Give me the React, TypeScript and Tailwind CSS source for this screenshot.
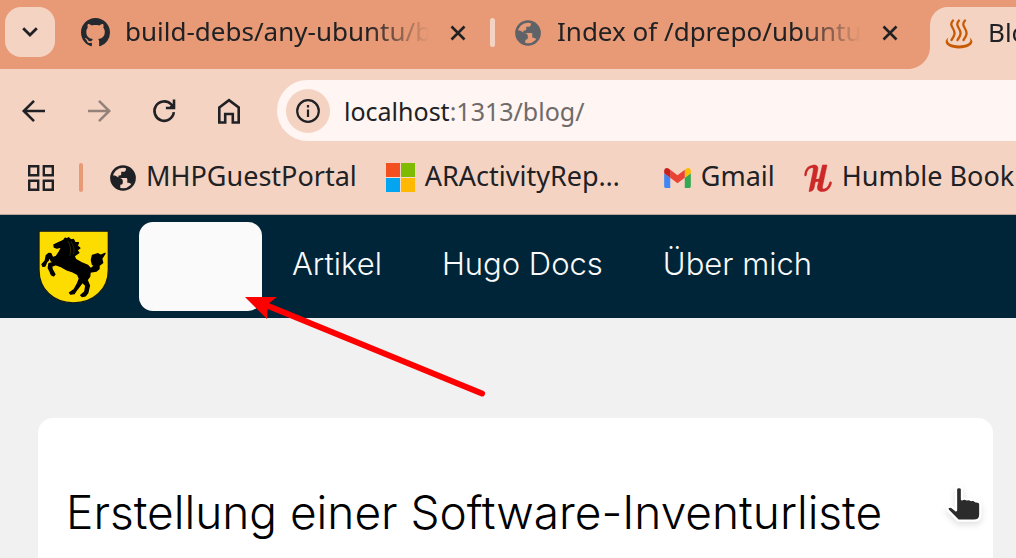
import type { ReactNode } from "react";

const GITHUB_MARK =
  "M8 0C3.58 0 0 3.58 0 8c0 3.54 2.29 6.53 5.47 7.59.4.07.55-.17.55-.38 0-.19-.01-.82-.01-1.49-2.01.37-2.53-.49-2.69-.94-.09-.23-.48-.94-.82-1.13-.28-.15-.68-.52-.01-.53.63-.01 1.08.58 1.23.82.72 1.21 1.87.87 2.33.66.07-.52.28-.87.51-1.07-1.78-.2-3.64-.89-3.64-3.95 0-.87.31-1.59.82-2.15-.08-.2-.36-1.02.08-2.12 0 0 .67-.21 2.2.82.64-.18 1.32-.27 2-.27.68 0 1.36.09 2 .27 1.53-1.04 2.2-.82 2.2-.82.44 1.1.16 1.92.08 2.12.51.56.82 1.27.82 2.15 0 3.07-1.87 3.75-3.65 3.95.29.25.54.73.54 1.48 0 1.07-.01 1.93-.01 2.2 0 .21.15.46.55.38A8.013 8.013 0 0016 8c0-4.42-3.58-8-8-8z";

function GithubIcon() {
  return (
    <svg viewBox="0 0 16 16" className="size-[29px]" fill="#24292f" aria-hidden="true">
      <path d={GITHUB_MARK} />
    </svg>
  );
}

function GlobeIcon({ className }: { className: string }) {
  return (
    <svg viewBox="0 0 26 26" className={className} aria-hidden="true">
      <circle cx="13" cy="13" r="11.6" fill="none" stroke="currentColor" strokeWidth="2.5" />
      <path
        fill="currentColor"
        d="M16.3 2.2 15.8 5c-.2 1.2-1 1.8-2.2 1.8h-2.4v2.4c0 .7-.5 1.2-1.2 1.2H8.4V13h7.5c.8 0 1.4.5 1.4 1.3v3.4h1.200c1.300 0 2.300.7 2.600 1.900C27 13.500 24.500 3.500 16.300 2.200z"
      />
      <path fill="currentColor" d="M1.500 10.500h3.500l4.500 2.600c1.800.3 3.300 1.300 3.300 3v1.600c0 1.200-.8 2-2.100 2h-.4v4.800C4.500 23.500.7 17.500 1.500 10.500z" />
    </svg>
  );
}

function SpringIcon() {
  return (
    <svg viewBox="0 0 28 30" className="h-[30px] w-7" fill="none" stroke="#c75a05" strokeLinecap="round" aria-hidden="true">
      <path strokeWidth="2.3" d="M8 1.500C3 7 10.500 9.500 9.500 15c-.3 2-1.500 4-3 6M14 1.500c-5 5.500 2.500 8 1.500 13.500-.3 2-1.500 4-3 6M20 1.500c-5 5.500 2.500 8 1.500 13.500-.3 2-1.500 4-3 6" />
      <path fill="#c75a05" stroke="none" d="M3.500 18.500C-3 23 2 29.500 14 29.500s17-6.500 10.500-11c3 4.500-2 8-10.500 8s-13.500-3.500-10.500-8z" />
    </svg>
  );
}

function CloseIcon() {
  return (
    <svg viewBox="0 0 16 16" className="size-4" fill="none" stroke="#202124" strokeWidth="2.600" aria-hidden="true">
      <path d="m1.500 1.500 13 13M14.500 1.500l-13 13" />
    </svg>
  );
}

function MicrosoftIcon() {
  return (
    <svg viewBox="0 0 29 29" className="size-[29px]" aria-hidden="true">
      <path fill="#f8d9cb" d="M0 0h29v29H0z" />
      <path fill="#f35022" d="M0 0h14v14H0z" />
      <path fill="#80bb03" d="M15 0h14v14H15z" />
      <path fill="#03a5f0" d="M0 15h14v14H0z" />
      <path fill="#ffb903" d="M15 15h14v14H15z" />
    </svg>
  );
}

function GmailIcon() {
  return (
    <svg viewBox="52 42 88 66" className="h-5 w-[27px]" aria-hidden="true">
      <path fill="#4285f4" d="M58 108h14V74L52 59v43c0 3.320 2.690 6 6 6" />
      <path fill="#34a853" d="M120 108h14c3.320 0 6-2.690 6-6V59l-20 15" />
      <path fill="#fbbc04" d="M120 48v26l20-15v-8c0-7.420-8.470-11.650-14.400-7.200" />
      <path fill="#ea4335" d="M72 74V48l24 18 24-18v26L96 92" />
      <path fill="#c5221f" d="M52 51v8l20 15V48l-5.600-4.200c-5.940-4.450-14.400-.22-14.400 7.200" />
    </svg>
  );
}

function HumbleIcon() {
  return (
    <svg viewBox="0 0 28 28" className="size-7" fill="none" stroke="#cc2929" aria-hidden="true">
      <path strokeWidth="2.400" strokeLinecap="round" d="M1.500 11C2 5 5 2 10 2.500" />
      <path
        fill="#cc2929"
        stroke="#cc2929"
        strokeWidth=".6"
        d="M8 1.500c5-1.500 6.500 1.500 5.700 4.500L10 24c-.4 2-2 3.500-5 3.500L9 8C9.500 5 9.500 2.800 8 1.500zM18.500 1h4.500L18.500 22c-.4 2 0 3 1 3 3 0 5.300-3 6-6.500.4-1.200 2.200-.8 2 .5C26.500 24 23 27.500 18.500 27.500c-4 0-5.500-2-5-5z"
      />
      <path strokeWidth="3" d="M7.500 16.500c5 .8 8 0 12-2" />
    </svg>
  );
}

function Crest() {
  return (
    <svg viewBox="55 44 214 222" className="h-[74px] w-[71px] shrink-0" role="img" aria-label="Wappen">
      <path fill="#fddc00" stroke="#101c1d" strokeWidth="4" d="M58 47h209v116c0 59-44 100-105 100S58 222 58 163z" />
      <path
        fill="#000"
        stroke="#000"
        strokeWidth="4"
        strokeLinejoin="round"
        d="M137 68 132 75 103 88 104 95 112 98 127 94 119 109 110 123 99 127 94 115 87 114 80 120 77 136 67 147 70 153 76 152 81 140 86 135 88 124 95 137 102 141 88 145 86 158 92 170 95 178 102 182 106 177 98 163 96 153 108 148 125 154 142 164 160 170 174 177 180 190 174 205 164 223 150 233 154 237 164 235 173 222 189 201 199 211 196 230 184 240 188 244 198 242 205 233 210 211 203 194 211 183 212 170 231 167 239 160 239 150 250 142 247 130 257 114 244 120 236 115 219 120 216 134 219 147 225 151 214 160 205 150 185 142 168 132 164 122 178 112 172 104 181 98 173 91 177 82 167 82 162 72 154 73 147 67 143 70z"
      />
      <path fill="none" stroke="#9b8800" strokeWidth="1" d="M145 77c8 12 11 28 6 44m3-43c8 12 12 24 8 38" />
    </svg>
  );
}

function Tab({ icon, title, active = false, divider = false }: { icon: ReactNode; title: string; active?: boolean; divider?: boolean }) {
  return (
    <div
      className={
        active
          ? "relative mt-[7px] flex w-[432px] shrink-0 items-center gap-[15px] rounded-t-[18px] bg-[#f5d3c3] pb-2 pl-3.5"
          : "relative flex w-[432px] shrink-0 items-center gap-[15px] pb-1 pl-[15px]"
      }
    >
      {active && (
        <svg viewBox="0 0 22 22" className="absolute bottom-0 -left-[22px] size-[22px]" fill="#f5d3c3" aria-hidden="true">
          <path d="M22 0v22H0C12 22 22 12 22 0z" />
        </svg>
      )}
      {divider && <span className="absolute top-[18px] -left-2 h-[29px] w-[5px] rounded-sm bg-[#f5d3c3]" />}
      <span className="flex w-[29px] shrink-0 justify-center">{icon}</span>
      <span className="w-[304px] overflow-hidden pb-1 whitespace-nowrap mask-r-from-80% mask-r-to-100%">{title}</span>
      <button type="button" aria-label={`${title} schließen`} className="ml-1.5">
        <CloseIcon />
      </button>
    </div>
  );
}

function Bookmark({ icon, label, wide = false }: { icon: ReactNode; label: string; wide?: boolean }) {
  return (
    <a href="#" className="flex shrink-0 items-center gap-2.5 whitespace-nowrap">
      {icon}
      <span className={wide ? "w-[210px] pb-1" : "pb-1"}>{label}</span>
    </a>
  );
}

function ToolButton({ label, children, faded = false }: { label: string; children: ReactNode; faded?: boolean }) {
  return (
    <button type="button" aria-label={label} className={faded ? "flex w-[65px] justify-center opacity-45" : "flex w-[65px] justify-center"}>
      <svg viewBox="0 0 26 26" className="size-[26px]" fill="none" stroke="#202124" strokeWidth="2.600" aria-hidden="true">
        {children}
      </svg>
    </button>
  );
}

function BrowserChrome() {
  return (
    <header className="overflow-hidden border-b border-[#b9a59b] bg-[#f5d3c3] font-['Noto_Sans',sans-serif] text-[26px] leading-8 text-[#202124]">
      <div className="flex h-[69px] bg-[#e79a75] pl-[5px]">
        <button type="button" aria-label="Tabs durchsuchen" className="mt-[7px] mr-[11px] flex size-[50px] shrink-0 items-center justify-center rounded-2xl bg-[#f5d3c3]">
          <svg viewBox="0 0 16 10" className="h-2.5 w-4" fill="none" stroke="#202124" strokeWidth="2.800" aria-hidden="true">
            <path d="m1.200 1.200 6.800 6.800 6.800-6.800" />
          </svg>
        </button>
        <Tab icon={<GithubIcon />} title="build-debs/any-ubuntu/build" />
        <Tab icon={<GlobeIcon className="size-[26px] text-[#5f6368]" />} title="Index of /dprepo/ubuntu/" divider />
        <Tab icon={<SpringIcon />} title="Blog" active />
      </div>

      <div className="flex items-center pt-[11px] pl-px">
        <ToolButton label="Zurück">
          <path d="M24 13H3.500M13 2.800 2.800 13 13 23.200" />
        </ToolButton>
        <ToolButton label="Vorwärts" faded>
          <path d="M2 13h20.500M13 2.800 23.200 13 13 23.200" />
        </ToolButton>
        <ToolButton label="Neu laden">
          <path d="M22.800 14.200A9.700 9.700 0 1 1 20 6.200l2 2" />
          <path fill="#202124" stroke="none" d="M24.300 1.500v9.800h-9.400V8.700h3.600l3.200-3V1.500z" />
        </ToolButton>
        <ToolButton label="Startseite">
          <path d="M3.300 9.500 13 2.200l9.700 7.300v15h-5.900v-8.500H9.200v8.500H3.300z" />
        </ToolButton>
        <div className="ml-4 flex h-[61px] flex-1 items-center gap-3.5 rounded-l-full bg-[#fff5f2] pl-[9px]">
          <button type="button" aria-label="Websiteinformationen" className="flex size-11 shrink-0 items-center justify-center rounded-full bg-[#f5d3c3]">
            <svg viewBox="0 0 24 24" className="size-6" fill="none" stroke="#202124" strokeWidth="2.200" aria-hidden="true">
              <circle cx="12" cy="12" r="10.800" />
              <path d="M12 10.500v7.500M12 6v2.600" />
            </svg>
          </button>
          <span className="text-[25px]">
            localhost<span className="text-[#6f6b6b]">:1313/blog/</span>
          </span>
        </div>
      </div>

      <nav aria-label="Lesezeichen" className="flex h-[73px] items-center gap-[29px] pl-7 text-[27px]">
        <button type="button" aria-label="Apps" className="-mr-1">
          <svg viewBox="0 0 26 26" className="size-[26px]" fill="none" stroke="#202124" strokeWidth="2.400" aria-hidden="true">
            <path d="M1.200 1.200h9v9h-9zM15.800 1.200h9v9h-9zM1.200 15.800h9v9h-9zM15.800 15.800h9v9h-9z" />
          </svg>
        </button>
        <span className="-mr-0.5 h-[29px] w-1 shrink-0 rounded-sm bg-[#e79a75]" />
        <Bookmark icon={<GlobeIcon className="size-[26px]" />} label="MHPGuestPortal" />
        <Bookmark icon={<MicrosoftIcon />} label="ARActivityRep…" wide />
        <Bookmark icon={<GmailIcon />} label="Gmail" />
        <Bookmark icon={<HumbleIcon />} label="Humble Book…" />
      </nav>
    </header>
  );
}

function SiteNav() {
  const item = "px-[30px] pb-1.5";
  return (
    <nav aria-label="Hauptmenü" className="flex h-[103px] items-center bg-[#002538] pl-[38px] font-['Inter',sans-serif] text-[31px] leading-10 font-light whitespace-nowrap text-[#fafafa]">
      <Crest />
      <a href="#" aria-label="Blog" className="ml-[30px] h-[89px] w-[123px] rounded-[14px] bg-[#fafafa]" />
      <a href="#" className={item}>Artikel</a>
      <a href="#" className={item}>Hugo Docs</a>
      <a href="#" className={item}>Über mich</a>
    </nav>
  );
}

export default function App() {
  return (
    <div className="relative flex h-screen flex-col overflow-hidden bg-[#f1f1f1]">
      <BrowserChrome />
      <SiteNav />
      <main className="flex-1 px-[23px] pt-[100px] pl-[38px]">
        <article className="h-full rounded-t-[15px] bg-white px-7 pt-16">
          <h1 className="font-['Inter',sans-serif] text-[46px] leading-[60px] font-light whitespace-nowrap text-black">
            Erstellung einer Software-Inventurliste
          </h1>
        </article>
      </main>

      <svg viewBox="245 295 242 104" className="pointer-events-none absolute top-[295px] left-[245px] h-[104px] w-[242px]" aria-hidden="true">
        <path stroke="#f00" strokeWidth="6" strokeLinecap="round" d="M267 305.500 482 393.500" />
        <path fill="#f00" d="M245 297h32l-9 7-1 15z" />
      </svg>
      <svg viewBox="45 255 114 120" className="pointer-events-none absolute top-[485px] left-[945px] h-10 w-[38px] drop-shadow-md" aria-hidden="true">
        <path
          fill="#2b2b2b"
          stroke="#fff"
          strokeWidth="7"
          strokeLinejoin="round"
          d="M78 268c0-9 18-9 18 0v30q7-4 14 0 8-3 14 2 8-3 13 4 14-1 14 10v30c0 12-8 18-20 18H84L54 331c-6-8 6-15 13-9l11 9z"
        />
      </svg>
    </div>
  );
}
